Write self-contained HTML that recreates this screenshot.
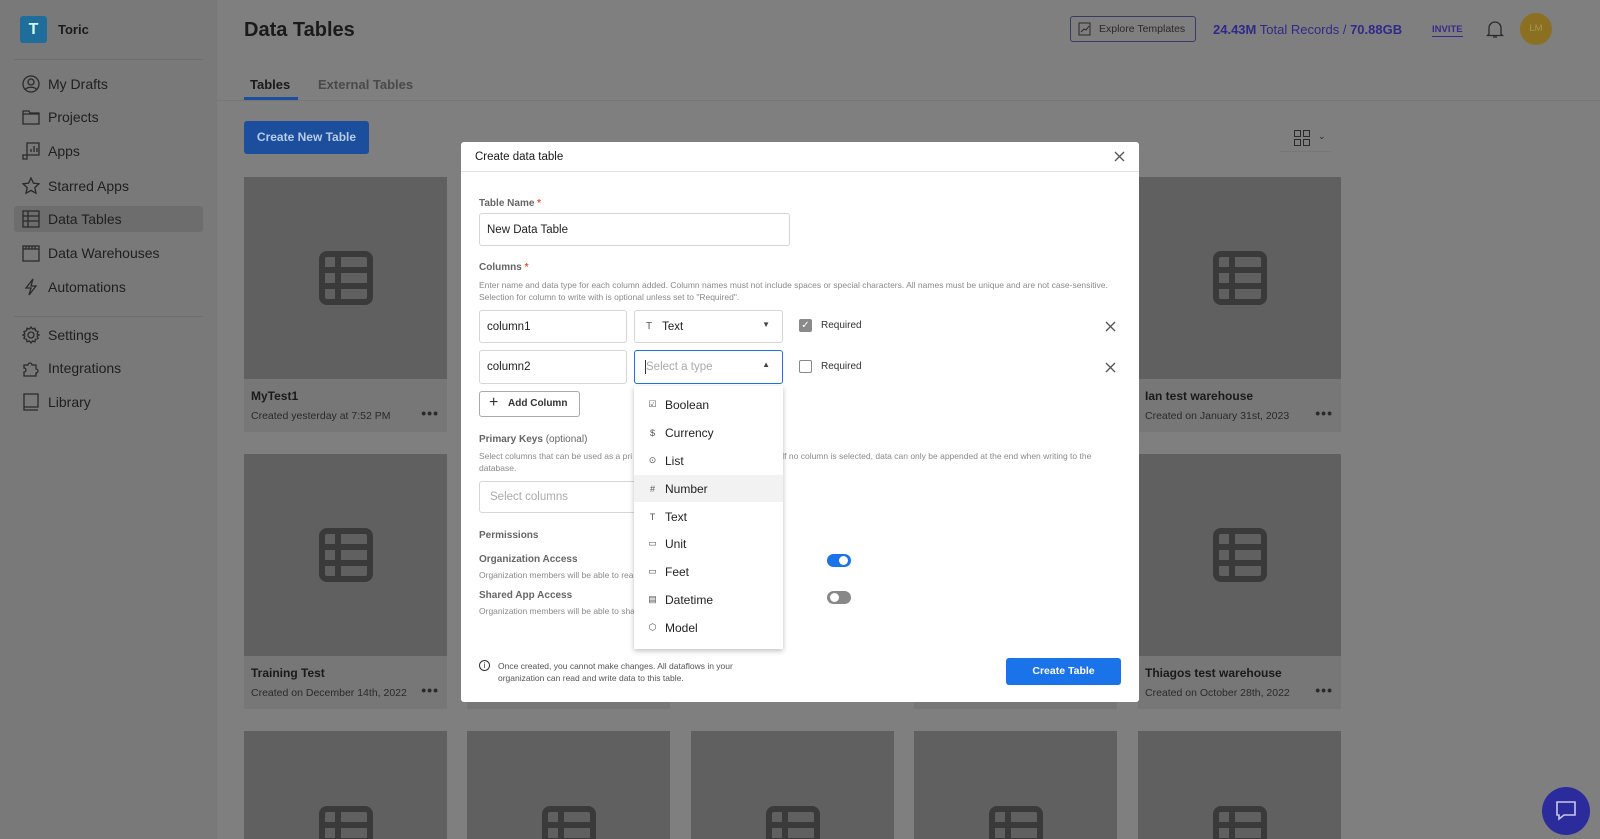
<!DOCTYPE html>
<html style="height:839px;overflow:hidden"><head><meta charset="utf-8"><style>
*{box-sizing:border-box;margin:0;padding:0}
html{height:839px;overflow:hidden;background:#7f7f7f}
body{width:1600px;height:839px;overflow:hidden;background:#7f7f7f;font-family:"Liberation Sans",sans-serif;position:relative;color:#1a1a1a}
.a{position:absolute}
.side{left:0;top:0;width:217px;height:839px;background:#797979}
.nav{left:22px;font-size:14px;color:#1f1f1f;display:flex;align-items:center;gap:8px}
.nav svg{width:18px;height:18px;fill:none;stroke:#2a2a2a;stroke-width:1.3}
.card{width:203px;height:255px;background:#777}
.card .img{position:absolute;left:0;top:0;width:203px;height:202px;background:#606060}
.card .t{position:absolute;left:7px;top:212px;font-size:12px;font-weight:bold;color:#1a1a1a}
.card .s{position:absolute;left:7px;top:233px;font-size:10.5px;color:#2a2a2a}
.card .d{position:absolute;right:8px;top:228px;font-size:14px;font-weight:bold;color:#2a2a2a;letter-spacing:1px}
.modal{left:461px;top:142px;width:678px;height:560px;background:#fff;border-radius:3px}
.lbl{font-size:10px;color:#666;font-weight:bold}
.desc{font-size:8.5px;color:#8a8a8a;line-height:12px}
.inp{border:1px solid #d6d6d6;border-radius:3px;background:#fff;font-size:11.5px;color:#222;display:flex;align-items:center;padding-left:7px}
.dd{left:634px;top:386px;width:149px;height:263px;background:#fff;box-shadow:0 2px 5px rgba(0,0,0,.25)}
.it{position:absolute;left:0;width:149px;height:27px;display:flex;align-items:center;font-size:12px;color:#222;padding-left:14px;gap:8px}
.it i{font-style:normal;font-size:9px;color:#555;width:9px;text-align:center}
.tb{position:absolute;left:75px;top:74px}
</style></head><body>
<div class="a side"></div>
<div class="a" style="left:20px;top:16px;width:27px;height:27px;background:#1f6d9b;border-radius:3px;color:#cfe;font-weight:bold;font-size:16px;text-align:center;line-height:27px">T</div>
<div class="a" style="left:58px;top:22px;font-size:13px;font-weight:bold;color:#1a1a1a">Toric</div>
<div class="a" style="left:14px;top:59px;width:189px;height:1px;background:#6e6e6e"></div>
<div class="a" style="left:14px;top:206px;width:189px;height:26px;background:#6d6d6d;border-radius:3px"></div>
<div class="a nav" style="top:75px"><svg viewBox="0 0 18 18"><circle cx="9" cy="9" r="8"/><circle cx="9" cy="7" r="3"/><path d="M3.5 14.5c2-3 9-3 11 0"/></svg>My Drafts</div>
<div class="a nav" style="top:108px"><svg viewBox="0 0 18 18"><path d="M1 3h6l1 2h9v11H1z M1 6h16"/></svg>Projects</div>
<div class="a nav" style="top:142px"><svg viewBox="0 0 18 18"><path d="M5 1h12v12H5z M1 13h4v4H1z M9 10V7M12 10V4M15 10V6"/></svg>Apps</div>
<div class="a nav" style="top:177px"><svg viewBox="0 0 18 18"><path d="M9 1l2.4 5.2 5.6.6-4.2 3.8 1.2 5.6L9 13.4 4 16.2l1.2-5.6L1 6.8l5.6-.6z"/></svg>Starred Apps</div>
<div class="a nav" style="top:210px"><svg viewBox="0 0 18 18"><path d="M1 1h16v16H1z M1 6h16M1 11h16M6 1v16"/></svg>Data Tables</div>
<div class="a nav" style="top:244px"><svg viewBox="0 0 18 18"><path d="M1 2h16v15H1z M1 5h16M4 2v3M7 2v3M10 2v3M13 2v3"/></svg>Data Warehouses</div>
<div class="a nav" style="top:278px"><svg viewBox="0 0 18 18"><path d="M11 1L4 10h5l-2 7 7-9H9z"/></svg>Automations</div>
<div class="a" style="left:14px;top:316px;width:189px;height:1px;background:#6e6e6e"></div>
<div class="a nav" style="top:326px"><svg viewBox="0 0 18 18"><circle cx="9" cy="9" r="3"/><path d="M9 1l1.5 2 2.5-.8.5 2.5 2.5.8-.8 2.5 1.8 1-1.8 1 .8 2.5-2.5.8-.5 2.5-2.5-.8L9 17l-1.5-2-2.5.8-.5-2.5-2.5-.8.8-2.5L1 9l1.8-1-.8-2.5 2.5-.8.5-2.5 2.5.8z"/></svg>Settings</div>
<div class="a nav" style="top:359px"><svg viewBox="0 0 18 18"><path d="M2 6h4a2 2 0 1 1 4 0h4v4a2 2 0 1 1 0 4v3H2v-4a2 2 0 1 0 0-4z"/></svg>Integrations</div>
<div class="a nav" style="top:393px"><svg viewBox="0 0 18 18"><path d="M2 1h14v13H2z M2 14v3h14"/></svg>Library</div>

<div class="a" style="left:244px;top:19px;font-size:20px;font-weight:bold;color:#1a1a1a">Data Tables</div>
<div class="a" style="left:250px;top:77px;font-size:13px;font-weight:bold;color:#1a1a1a">Tables</div>
<div class="a" style="left:318px;top:77px;font-size:13px;font-weight:bold;color:#4a4a4a">External Tables</div>
<div class="a" style="left:217px;top:100px;width:1383px;height:1px;background:#777"></div>
<div class="a" style="left:244px;top:97px;width:54px;height:3px;background:#1b4f9e"></div>
<div class="a" style="left:244px;top:121px;width:125px;height:33px;background:#1b4f9e;border-radius:3px;color:#b9cbe6;font-size:12px;font-weight:bold;text-align:center;line-height:33px">Create New Table</div>
<div class="a" style="left:1294px;top:130px;width:16px;height:16px;display:grid;grid-template-columns:7px 7px;gap:2px"><b style="border:1.3px solid #2a2a2a"></b><b style="border:1.3px solid #2a2a2a"></b><b style="border:1.3px solid #2a2a2a"></b><b style="border:1.3px solid #2a2a2a"></b></div>
<div class="a" style="left:1318px;top:131px;font-size:9px;color:#2a2a2a">⌄</div>
<div class="a" style="left:1280px;top:151px;width:52px;height:1px;background:#777"></div>

<div class="a" style="left:1070px;top:16px;width:126px;height:26px;border:1px solid #3a3a6a;border-radius:3px;font-size:10.5px;color:#2a2a2a;line-height:24px;padding-left:28px">Explore Templates</div>
<svg class="a" style="left:1078px;top:22px" width="13" height="14" viewBox="0 0 13 14" fill="none" stroke="#2a2a2a"><path d="M1 1h11v12H1z M3 10l3-3 2 1 3-4"/></svg>
<div class="a" style="left:1213px;top:22px;font-size:13px;color:#2e2a8a"><b>24.43M</b> Total Records / <b>70.88GB</b></div>
<div class="a" style="left:1432px;top:24px;font-size:9.5px;font-weight:bold;color:#3a2a8a;border-bottom:1.5px solid #3a2a8a;padding-bottom:1px">INVITE</div>
<svg class="a" style="left:1486px;top:19px" width="18" height="20" viewBox="0 0 18 20" fill="none" stroke="#2a2a2a" stroke-width="1.3"><path d="M3 15V9a6 6 0 0 1 12 0v6l1.5 1.5h-15z M7 18h4"/></svg>
<div class="a" style="left:1520px;top:13px;width:32px;height:32px;border-radius:50%;background:#8a7020;color:#a79553;font-size:9.5px;text-align:center;line-height:32px">LM</div>

<div class="a card" style="left:244px;top:177px"><div class="img"></div><div class="t">MyTest1</div><div class="s">Created yesterday at 7:52 PM</div><div class="d">•••</div></div>
<div class="a card" style="left:1138px;top:177px"><div class="img"></div><div class="t">Ian test warehouse</div><div class="s">Created on January 31st, 2023</div><div class="d">•••</div></div>
<div class="a card" style="left:244px;top:454px"><div class="img"></div><div class="t">Training Test</div><div class="s">Created on December 14th, 2022</div><div class="d">•••</div></div>
<div class="a card" style="left:1138px;top:454px"><div class="img"></div><div class="t">Thiagos test warehouse</div><div class="s">Created on October 28th, 2022</div><div class="d">•••</div></div>
<div class="a card" style="left:467px;top:177px"><div class="img"></div></div>
<div class="a card" style="left:914px;top:177px"><div class="img"></div></div>
<div class="a card" style="left:467px;top:454px"><div class="img"></div></div>
<div class="a card" style="left:914px;top:454px"><div class="img"></div></div>
<div class="a card" style="left:244px;top:731px;height:108px"><div class="img" style="height:108px"></div></div>
<div class="a card" style="left:467px;top:731px;height:108px"><div class="img" style="height:108px"></div></div>
<div class="a card" style="left:691px;top:731px;height:108px"><div class="img" style="height:108px"></div></div>
<div class="a card" style="left:914px;top:731px;height:108px"><div class="img" style="height:108px"></div></div>
<div class="a card" style="left:1138px;top:731px;height:108px"><div class="img" style="height:108px"></div></div>
<svg class="a" style="left:319px;top:251px" width="54" height="54" viewBox="0 0 54 54" fill="none" stroke="#3a3a3a" stroke-width="6"><rect x="3" y="3" width="48" height="48" rx="5"/><path d="M3 19h48M3 35h48M19 3v48"/></svg>
<svg class="a" style="left:1213px;top:251px" width="54" height="54" viewBox="0 0 54 54" fill="none" stroke="#3a3a3a" stroke-width="6"><rect x="3" y="3" width="48" height="48" rx="5"/><path d="M3 19h48M3 35h48M19 3v48"/></svg>
<svg class="a" style="left:319px;top:528px" width="54" height="54" viewBox="0 0 54 54" fill="none" stroke="#3a3a3a" stroke-width="6"><rect x="3" y="3" width="48" height="48" rx="5"/><path d="M3 19h48M3 35h48M19 3v48"/></svg>
<svg class="a" style="left:1213px;top:528px" width="54" height="54" viewBox="0 0 54 54" fill="none" stroke="#3a3a3a" stroke-width="6"><rect x="3" y="3" width="48" height="48" rx="5"/><path d="M3 19h48M3 35h48M19 3v48"/></svg>
<svg class="a" style="left:319px;top:806px" width="54" height="33" viewBox="0 0 54 33" fill="none" stroke="#3a3a3a" stroke-width="6"><rect x="3" y="3" width="48" height="48" rx="5"/><path d="M3 19h48M3 35h48M19 3v48"/></svg>
<svg class="a" style="left:542px;top:806px" width="54" height="33" viewBox="0 0 54 33" fill="none" stroke="#3a3a3a" stroke-width="6"><rect x="3" y="3" width="48" height="48" rx="5"/><path d="M3 19h48M3 35h48M19 3v48"/></svg>
<svg class="a" style="left:766px;top:806px" width="54" height="33" viewBox="0 0 54 33" fill="none" stroke="#3a3a3a" stroke-width="6"><rect x="3" y="3" width="48" height="48" rx="5"/><path d="M3 19h48M3 35h48M19 3v48"/></svg>
<svg class="a" style="left:989px;top:806px" width="54" height="33" viewBox="0 0 54 33" fill="none" stroke="#3a3a3a" stroke-width="6"><rect x="3" y="3" width="48" height="48" rx="5"/><path d="M3 19h48M3 35h48M19 3v48"/></svg>
<svg class="a" style="left:1213px;top:806px" width="54" height="33" viewBox="0 0 54 33" fill="none" stroke="#3a3a3a" stroke-width="6"><rect x="3" y="3" width="48" height="48" rx="5"/><path d="M3 19h48M3 35h48M19 3v48"/></svg>

<div class="a" style="left:1542px;top:787px;width:48px;height:48px;border-radius:50%;background:#2b2b9c"></div>
<svg class="a" style="left:1555px;top:800px" width="22" height="22" viewBox="0 0 22 22" fill="none" stroke="#c8c8e8" stroke-width="1.6"><path d="M2 2h18v13H9l-5 4v-4H2z"/></svg>

<div class="a modal"></div>
<div class="a" style="left:475px;top:151px;font-size:11.5px;color:#1a1a1a">Create data table</div>
<svg class="a" style="left:1114px;top:151px" width="11" height="11" viewBox="0 0 11 11" stroke="#555" stroke-width="1.3"><path d="M1 1l9 9M10 1l-9 9"/></svg>
<div class="a" style="left:461px;top:171px;width:678px;height:1px;background:#e4e4e4"></div>
<div class="a lbl" style="left:479px;top:198px">Table Name <span style="color:#e53">*</span></div>
<div class="a inp" style="left:479px;top:213px;width:311px;height:33px">New Data Table</div>
<div class="a lbl" style="left:479px;top:262px">Columns <span style="color:#e53">*</span></div>
<div class="a desc" style="left:479px;top:279px">Enter name and data type for each column added. Column names must not include spaces or special characters. All names must be unique and are not case-sensitive.<br>Selection for column to write with is optional unless set to "Required".</div>
<div class="a inp" style="left:479px;top:310px;width:148px;height:33px">column1</div>
<div class="a inp" style="left:634px;top:310px;width:149px;height:33px;padding-left:11px"><span style="font-size:10px;color:#555;margin-right:10px">T</span>Text<span style="position:absolute;right:12px;top:9px;font-size:8px;color:#444">▼</span></div>
<div class="a" style="left:799px;top:319px;width:13px;height:13px;background:#8a8a8a;border-radius:2px;color:#fff;font-size:10px;text-align:center;line-height:13px">✓</div>
<div class="a" style="left:821px;top:320px;font-size:10px;color:#333">Required</div>
<svg class="a" style="left:1105px;top:321px" width="11" height="11" viewBox="0 0 11 11" stroke="#555" stroke-width="1.3"><path d="M1 1l9 9M10 1l-9 9"/></svg>
<div class="a inp" style="left:479px;top:350px;width:148px;height:34px">column2</div>
<div class="a inp" style="left:634px;top:350px;width:149px;height:34px;border:1.5px solid #1a73e8;color:#aaa;padding-left:11px">Select a type<span style="position:absolute;right:12px;top:9px;font-size:8px;color:#444">▲</span></div>
<div class="a" style="left:645px;top:360px;width:1px;height:14px;background:#333"></div>
<div class="a" style="left:799px;top:360px;width:13px;height:13px;border:1.2px solid #888;border-radius:2px"></div>
<div class="a" style="left:821px;top:361px;font-size:10px;color:#333">Required</div>
<svg class="a" style="left:1105px;top:362px" width="11" height="11" viewBox="0 0 11 11" stroke="#555" stroke-width="1.3"><path d="M1 1l9 9M10 1l-9 9"/></svg>
<div class="a" style="left:479px;top:391px;width:101px;height:26px;border:1px solid #aaa;border-radius:3px;font-size:10px;font-weight:bold;color:#333;line-height:24px;padding-left:28px">Add Column</div>
<div class="a" style="left:489px;top:394px;font-size:16px;color:#333">+</div>
<div class="a" style="left:479px;top:434px;font-size:10px;color:#666"><b>Primary Keys</b> (optional)</div>
<div class="a desc" style="left:479px;top:450px;width:640px">Select columns that can be used as a pri<span style="display:inline-block;width:145px"></span>. If no column is selected, data can only be appended at the end when writing to the database.</div>
<div class="a inp" style="left:479px;top:481px;width:160px;height:32px;color:#aaa;padding-left:10px">Select columns</div>
<div class="a lbl" style="left:479px;top:530px">Permissions</div>
<div class="a lbl" style="left:479px;top:554px">Organization Access</div>
<div class="a desc" style="left:479px;top:569px">Organization members will be able to rea</div>
<div class="a lbl" style="left:479px;top:590px">Shared App Access</div>
<div class="a desc" style="left:479px;top:605px">Organization members will be able to sha</div>
<div class="a" style="left:827px;top:554px;width:24px;height:13px;border-radius:7px;background:#1a73e8"></div>
<div class="a" style="left:839px;top:556px;width:9px;height:9px;border-radius:50%;background:#fff"></div>
<div class="a" style="left:827px;top:591px;width:24px;height:13px;border-radius:7px;background:#888"></div>
<div class="a" style="left:830px;top:593px;width:9px;height:9px;border-radius:50%;background:#fff"></div>
<div class="a" style="left:479px;top:660px;width:11px;height:11px;border:1.2px solid #333;border-radius:50%;font-size:8px;text-align:center;line-height:9px;color:#333">i</div>
<div class="a desc" style="left:498px;top:660px;color:#555">Once created, you cannot make changes. All dataflows in your<br>organization can read and write data to this table.</div>
<div class="a" style="left:1006px;top:658px;width:115px;height:27px;background:#1a73e8;border-radius:3px;color:#fff;font-size:10.5px;font-weight:bold;text-align:center;line-height:27px">Create Table</div>

<div class="a dd">
<div class="it" style="top:5px"><i>☑</i>Boolean</div>
<div class="it" style="top:33px"><i>$</i>Currency</div>
<div class="it" style="top:61px"><i>⊙</i>List</div>
<div class="it" style="top:89px;background:#f2f2f2"><i>#</i>Number</div>
<div class="it" style="top:117px"><i>T</i>Text</div>
<div class="it" style="top:144px"><i>▭</i>Unit</div>
<div class="it" style="top:172px"><i>▭</i>Feet</div>
<div class="it" style="top:200px"><i>▤</i>Datetime</div>
<div class="it" style="top:228px"><i>⬡</i>Model</div>
</div>
</body></html>
